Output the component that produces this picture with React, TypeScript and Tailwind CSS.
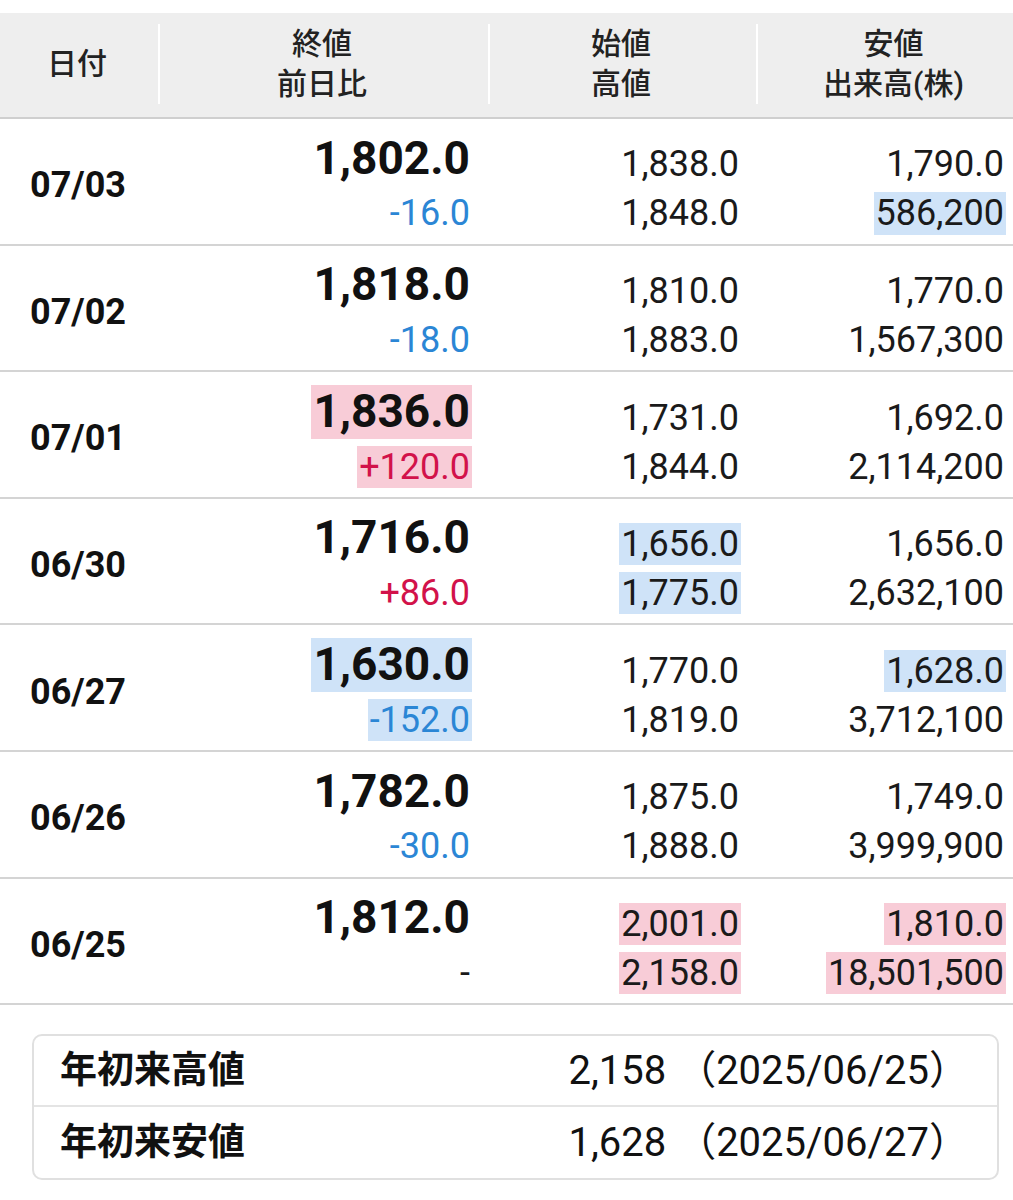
import React from 'react';

type Tone = 'plain' | 'up' | 'down';
type Mark = 'none' | 'blue' | 'pink';

interface Cell {
  text: string;
  tone?: Tone;
  mark?: Mark;
}

interface Row {
  date: string;
  close: Cell;
  change: Cell;
  open: Cell;
  high: Cell;
  low: Cell;
  volume: Cell;
}

const rows: Row[] = [
  {
    date: '07/03',
    close: { text: '1,802.0' },
    change: { text: '-16.0', tone: 'down' },
    open: { text: '1,838.0' },
    high: { text: '1,848.0' },
    low: { text: '1,790.0' },
    volume: { text: '586,200', mark: 'blue' },
  },
  {
    date: '07/02',
    close: { text: '1,818.0' },
    change: { text: '-18.0', tone: 'down' },
    open: { text: '1,810.0' },
    high: { text: '1,883.0' },
    low: { text: '1,770.0' },
    volume: { text: '1,567,300' },
  },
  {
    date: '07/01',
    close: { text: '1,836.0', mark: 'pink' },
    change: { text: '+120.0', tone: 'up', mark: 'pink' },
    open: { text: '1,731.0' },
    high: { text: '1,844.0' },
    low: { text: '1,692.0' },
    volume: { text: '2,114,200' },
  },
  {
    date: '06/30',
    close: { text: '1,716.0' },
    change: { text: '+86.0', tone: 'up' },
    open: { text: '1,656.0', mark: 'blue' },
    high: { text: '1,775.0', mark: 'blue' },
    low: { text: '1,656.0' },
    volume: { text: '2,632,100' },
  },
  {
    date: '06/27',
    close: { text: '1,630.0', mark: 'blue' },
    change: { text: '-152.0', tone: 'down', mark: 'blue' },
    open: { text: '1,770.0' },
    high: { text: '1,819.0' },
    low: { text: '1,628.0', mark: 'blue' },
    volume: { text: '3,712,100' },
  },
  {
    date: '06/26',
    close: { text: '1,782.0' },
    change: { text: '-30.0', tone: 'down' },
    open: { text: '1,875.0' },
    high: { text: '1,888.0' },
    low: { text: '1,749.0' },
    volume: { text: '3,999,900' },
  },
  {
    date: '06/25',
    close: { text: '1,812.0' },
    change: { text: '-' },
    open: { text: '2,001.0', mark: 'pink' },
    high: { text: '2,158.0', mark: 'pink' },
    low: { text: '1,810.0', mark: 'pink' },
    volume: { text: '18,501,500', mark: 'pink' },
  },
];

const toneClass: Record<Tone, string> = {
  plain: 'text-[#1a1a1a]',
  up: 'text-[#d2124a]',
  down: 'text-[#2b86d5]',
};

const markClass: Record<Mark, string> = {
  none: '',
  blue: 'bg-[#cfe3f8]',
  pink: 'bg-[#f8ccd7]',
};

const Value: React.FC<{ cell: Cell; big?: boolean }> = ({ cell, big }) => (
  <span
    className={`inline-block px-[2px] leading-[1.17] ${
      big ? 'text-[46px] font-bold text-[#111]' : `text-[36px] ${toneClass[cell.tone ?? 'plain']}`
    } ${markClass[cell.mark ?? 'none']}`}
  >
    {cell.text}
  </span>
);

const HeaderCell: React.FC<{ lines: string[]; divider?: boolean; shift?: boolean }> = ({ lines, divider, shift }) => (
  <div className="flex items-stretch">
    {divider && <div className="my-[11px] w-[2px] bg-white" />}
    <div className={`flex flex-1 flex-col items-center justify-center ${shift ? 'pl-[16px]' : 'pr-[4px]'}`}>
      {lines.map((l) => (
        <span key={l} className="text-[30px] font-medium leading-[40px] text-[#222]">
          {l}
        </span>
      ))}
    </div>
  </div>
);

export default function App() {
  return (
    <div className="min-h-[1200px] w-[1013px] overflow-hidden bg-white pt-[13px] font-[Roboto,'Noto_Sans_CJK_JP',sans-serif]">
      {/* Header */}
      <div className="grid h-[106px] grid-cols-[158px_330px_268px_1fr] border-b-2 border-[#cfcfcf] bg-[#eeeeee] pb-[2px]">
        <HeaderCell lines={['日付']} />
        <HeaderCell lines={['終値', '前日比']} divider />
        <HeaderCell lines={['始値', '高値']} divider />
        <HeaderCell lines={['安値', '出来高(株)']} divider shift />
      </div>

      {/* Rows */}
      {rows.map((r) => (
        <div
          key={r.date}
          className="grid h-[126.6px] grid-cols-[158px_330px_268px_1fr] border-b-2 border-[#d4d4d4]"
        >
          <div className="flex items-center pl-[30px] pt-[8px] text-[36px] font-bold text-[#111]">{r.date}</div>
          <div className="flex flex-col items-end justify-end gap-[7px] pb-[9px] pr-[16px]">
            <Value cell={r.close} big />
            <Value cell={r.change} />
          </div>
          <div className="flex flex-col items-end justify-end gap-[7px] pb-[9px] pr-[15px]">
            <Value cell={r.open} />
            <Value cell={r.high} />
          </div>
          <div className="flex flex-col items-end justify-end gap-[7px] pb-[9px] pr-[7px]">
            <Value cell={r.low} />
            <Value cell={r.volume} />
          </div>
        </div>
      ))}

      {/* Year range */}
      <div className="ml-[32px] mr-[14px] mt-[29px] overflow-hidden rounded-[10px] border-2 border-[#e0e0e0]">
        <div className="flex h-[71px] items-center justify-between border-b-2 border-[#e4e4e4] pl-[26px] pr-[28px]">
          <span className="text-[37px] font-bold text-[#111]">年初来高値</span>
          <span className="text-[40px] text-[#111]">2,158 （2025/06/25）</span>
        </div>
        <div className="flex h-[71px] items-center justify-between pl-[26px] pr-[28px]">
          <span className="text-[37px] font-bold text-[#111]">年初来安値</span>
          <span className="text-[40px] text-[#111]">1,628 （2025/06/27）</span>
        </div>
      </div>
    </div>
  );
}
